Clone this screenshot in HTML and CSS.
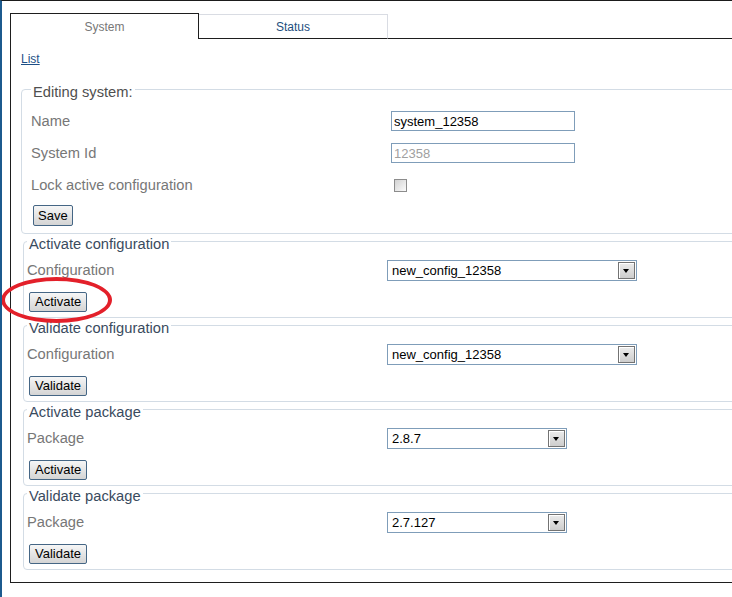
FILE: index.html
```html
<!DOCTYPE html>
<html lang="en">
<head>
<meta charset="utf-8">
<title>System</title>
<link rel="stylesheet" href="styles.css">
</head>
<body>
<div class="page">
  <div class="tabs">
    <div class="tab tab-active">System</div>
    <div class="tab tab-inactive">Status</div>
    <div class="tab-fill"></div>
  </div>
  <div class="panel">
    <a class="list-link" href="#">List</a>

    <fieldset class="fs fs-edit">
      <legend>Editing system:</legend>
      <div class="row"><label>Name</label><input class="text" type="text" value="system_12358"></div>
      <div class="row"><label>System Id</label><input class="text" type="text" value="12358" disabled></div>
      <div class="row"><label>Lock active configuration</label><input class="check" type="checkbox"></div>
      <div class="actions"><button class="btn btn-save">Save</button></div>
    </fieldset>

    <fieldset class="fs">
      <legend>Activate configuration</legend>
      <div class="row"><label>Configuration</label><span class="select select-wide"><select><option>new_config_12358</option></select><span class="arrow"></span></span></div>
      <div class="actions"><span class="mark"><button class="btn">Activate</button><span class="ring"></span></span></div>
    </fieldset>

    <fieldset class="fs">
      <legend>Validate configuration</legend>
      <div class="row"><label>Configuration</label><span class="select select-wide"><select><option>new_config_12358</option></select><span class="arrow"></span></span></div>
      <div class="actions"><button class="btn">Validate</button></div>
    </fieldset>

    <fieldset class="fs">
      <legend>Activate package</legend>
      <div class="row"><label>Package</label><span class="select select-narrow"><select><option>2.8.7</option></select><span class="arrow"></span></span></div>
      <div class="actions"><button class="btn">Activate</button></div>
    </fieldset>

    <fieldset class="fs">
      <legend>Validate package</legend>
      <div class="row"><label>Package</label><span class="select select-narrow"><select><option>2.7.127</option></select><span class="arrow"></span></span></div>
      <div class="actions"><button class="btn">Validate</button></div>
    </fieldset>
  </div>
</div>
</body>
</html>
```

FILE: styles.css
```css
html, body {
  margin: 0;
  overflow: hidden;
}

body {
  font-family: "Liberation Sans", Arial, sans-serif;
  background: #fff;
  border-top: 1px solid #1b1b1b;
  border-left: 2px solid #1c5a8e;
  height: 597px;
  box-sizing: border-box;
  padding: 12px 0 0 8px;
}

.page {
  width: 760px;
}

/* Tabs */
.tabs {
  display: flex;
  align-items: flex-end;
  height: 26px;
}

.tab {
  box-sizing: border-box;
  width: 189px;
  text-align: center;
  font-size: 12px;
}

.tab-active {
  height: 26px;
  padding-top: 1px;
  border: 1px solid #1e1e1e;
  border-bottom: none;
  color: #777;
  line-height: 24px;
}

.tab-inactive {
  height: 25px;
  padding-top: 1px;
  border-top: 1px solid #d9dce3;
  border-right: 1px solid #d9dce3;
  border-bottom: 1px solid #1e1e1e;
  color: #1d4e7e;
  line-height: 22px;
}

.tab-fill {
  flex: 1;
  height: 0;
  border-bottom: 1px solid #1e1e1e;
}

/* Panel */
.panel {
  border-left: 1px solid #1e1e1e;
  border-bottom: 1px solid #1e1e1e;
  padding: 13px 0 12px 10px;
}

.list-link {
  display: block;
  width: fit-content;
  font-size: 12px;
  line-height: 14px;
  color: #1d4f86;
  text-decoration: underline;
}

/* Fieldsets */
.fs {
  margin: -3px 0 0 2px;
  border: 1px solid #d3dce5;
  border-radius: 4px;
  padding: 9px 0 5px 3px;
  min-width: 0;
}

.fs legend {
  padding: 6px 2px 0;
  font-size: 14.7px;
  line-height: 14px;
  color: #3a4b5e;
}

.fs-edit {
  margin: 13px 0 0 0;
  padding: 6px 0 7px 9px;
}

.fs-edit legend {
  color: #4f4f4f;
}

.row {
  display: flex;
  align-items: center;
  height: 21px;
}

.fs-edit .row {
  height: 32px;
}

.row label {
  width: 360px;
  flex: none;
  margin-bottom: 2px;
  font-size: 14.7px;
  color: #777;
}

.fs-edit .row label {
  margin-bottom: 0;
}

/* Inputs */
.text {
  box-sizing: border-box;
  width: 184px;
  height: 20px;
  margin: 0;
  padding: 0 2px;
  border: 1px solid #7f9db9;
  font-family: "Liberation Sans", Arial, sans-serif;
  font-size: 13px;
  color: #000;
  background: #fff;
}

.text:disabled {
  color: #a0a0a0;
  background: #fff;
}

.check {
  appearance: none;
  -webkit-appearance: none;
  box-sizing: border-box;
  width: 13px;
  height: 13px;
  margin: 0 0 0 3px;
  border: 1px solid #8c8c8c;
  background: linear-gradient(135deg, #d2d2d2, #fbfbfb);
}

/* Selects */
.select {
  position: relative;
  display: inline-block;
  height: 21px;
}

.select-wide {
  width: 250px;
}

.select-narrow {
  width: 180px;
}

.select select {
  appearance: none;
  -webkit-appearance: none;
  box-sizing: border-box;
  width: 100%;
  height: 100%;
  margin: 0;
  padding: 0 0 0 4px;
  border: 1px solid #7f9db9;
  border-radius: 0;
  background: #fff;
  font-family: "Liberation Sans", Arial, sans-serif;
  font-size: 13px;
  color: #000;
}

.arrow {
  position: absolute;
  right: 2px;
  top: 2px;
  width: 17px;
  height: 17px;
  box-sizing: border-box;
  border: 1px solid #737373;
  background: linear-gradient(#ececec, #cdcdcd);
  box-shadow: inset 1px 1px 0 #fff;
  pointer-events: none;
}

.arrow::after {
  content: "";
  position: absolute;
  left: 4px;
  top: 6px;
  border-left: 3.5px solid transparent;
  border-right: 3.5px solid transparent;
  border-top: 4px solid #000;
}

/* Buttons */
.actions {
  display: flex;
  margin-top: 11px;
}

.fs-edit .actions {
  margin-top: 4px;
}

.btn {
  box-sizing: border-box;
  height: 20px;
  margin: 0 0 0 2px;
  padding: 0 5px;
  border: 1px solid #456685;
  border-radius: 2px;
  background: linear-gradient(#f6f6f6, #d4d4d4);
  font-family: "Liberation Sans", Arial, sans-serif;
  font-size: 13px;
  color: #000;
  line-height: 18px;
}

.btn-save {
  height: 21px;
  padding: 0 4px;
}

.mark {
  position: relative;
  display: inline-flex;
}

.ring {
  position: absolute;
  left: -26px;
  top: -15px;
  width: 111px;
  height: 46px;
  box-sizing: border-box;
  border: 4px solid #e3202a;
  border-radius: 50%;
  pointer-events: none;
}
```
